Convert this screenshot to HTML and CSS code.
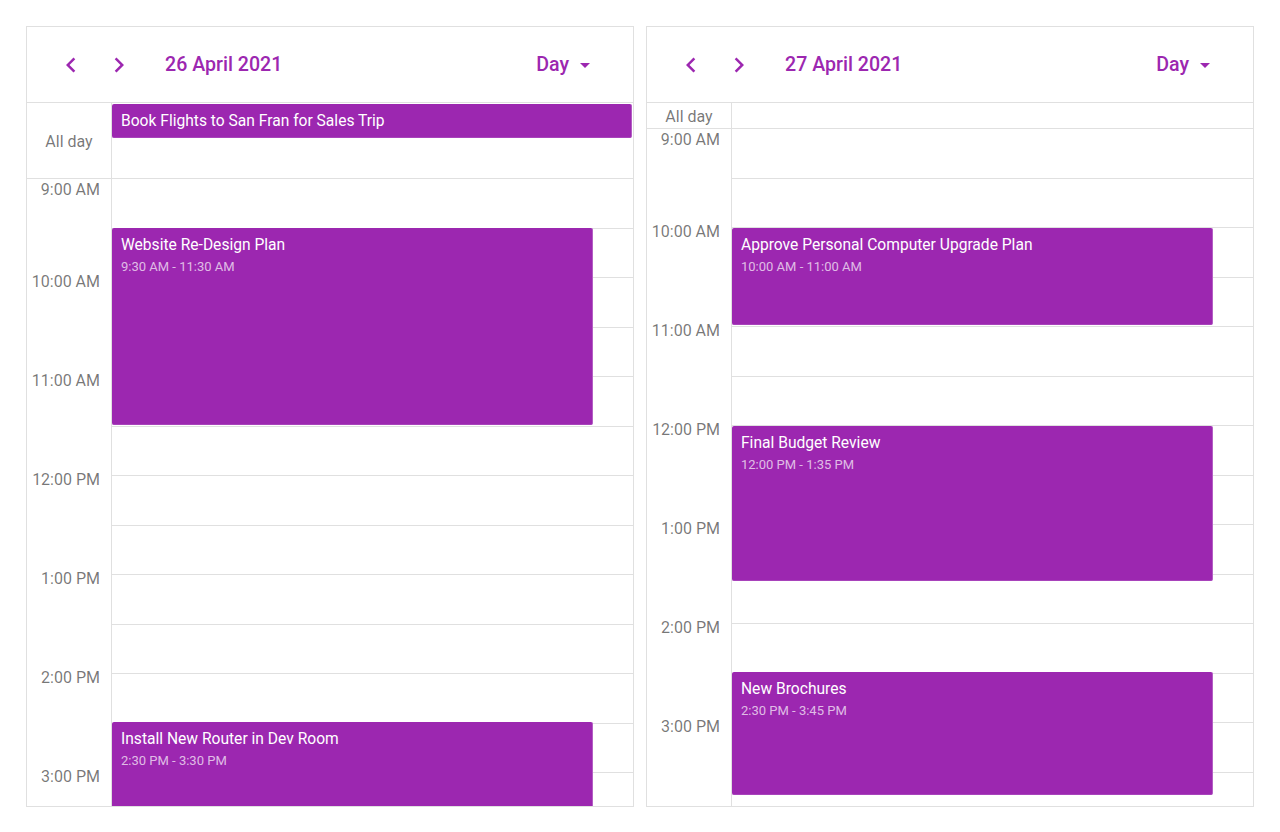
FILE: index.html
```
<!DOCTYPE html>
<html lang="en">

<head>
    <link rel="stylesheet" href="styles.css">
</head>

<body>
    <div class="schedulers">
        <div class="scheduler">
            <div class="toolbar">
                <button class="nav-button">
                    <svg viewBox="0 0 24 24"><path d="M15.41 7.41L14 6l-6 6 6 6 1.41-1.41L10.83 12z"></path></svg>
                </button>
                <button class="nav-button">
                    <svg viewBox="0 0 24 24"><path d="M10 6L8.59 7.41 13.17 12l-4.58 4.59L10 18l6-6z"></path></svg>
                </button>
                <span class="current-date">26 April 2021</span>
                <button class="view-switcher">Day
                    <svg viewBox="0 0 24 24"><path d="M7 10l5 5 5-5z"></path></svg>
                </button>
            </div>
            <div class="all-day-row all-day-row-tall">
                <div class="all-day-label">All day</div>
                <div class="all-day-cell">
                    <div class="appointment all-day-appointment">Book Flights to San Fran for Sales Trip</div>
                </div>
            </div>
            <div class="day-view">
                <div class="time-scale">
                    <div class="time-label">9:00 AM</div>
                    <div class="time-label">10:00 AM</div>
                    <div class="time-label">11:00 AM</div>
                    <div class="time-label">12:00 PM</div>
                    <div class="time-label">1:00 PM</div>
                    <div class="time-label">2:00 PM</div>
                    <div class="time-label">3:00 PM</div>
                </div>
                <div class="day-column">
                    <div class="slot"></div><div class="slot"></div><div class="slot"></div><div class="slot"></div>
                    <div class="slot"></div><div class="slot"></div><div class="slot"></div><div class="slot"></div>
                    <div class="slot"></div><div class="slot"></div><div class="slot"></div><div class="slot"></div>
                    <div class="slot"></div><div class="slot"></div><div class="slot"></div><div class="slot"></div>

                    <div class="appointment timed-appointment" style="top: 48.5px; height: 197px;">
                        <div class="appointment-title">Website Re-Design Plan</div>
                        <div class="appointment-time">9:30 AM - 11:30 AM</div>
                    </div>
                    <div class="appointment timed-appointment" style="top: 542.5px; height: 97px;">
                        <div class="appointment-title">Install New Router in Dev Room</div>
                        <div class="appointment-time">2:30 PM - 3:30 PM</div>
                    </div>
                </div>
            </div>
        </div>

        <div class="scheduler">
            <div class="toolbar">
                <button class="nav-button">
                    <svg viewBox="0 0 24 24"><path d="M15.41 7.41L14 6l-6 6 6 6 1.41-1.41L10.83 12z"></path></svg>
                </button>
                <button class="nav-button">
                    <svg viewBox="0 0 24 24"><path d="M10 6L8.59 7.41 13.17 12l-4.58 4.59L10 18l6-6z"></path></svg>
                </button>
                <span class="current-date">27 April 2021</span>
                <button class="view-switcher">Day
                    <svg viewBox="0 0 24 24"><path d="M7 10l5 5 5-5z"></path></svg>
                </button>
            </div>
            <div class="all-day-row">
                <div class="all-day-label">All day</div>
                <div class="all-day-cell"></div>
            </div>
            <div class="day-view">
                <div class="time-scale">
                    <div class="time-label">9:00 AM</div>
                    <div class="time-label">10:00 AM</div>
                    <div class="time-label">11:00 AM</div>
                    <div class="time-label">12:00 PM</div>
                    <div class="time-label">1:00 PM</div>
                    <div class="time-label">2:00 PM</div>
                    <div class="time-label">3:00 PM</div>
                </div>
                <div class="day-column">
                    <div class="slot"></div><div class="slot"></div><div class="slot"></div><div class="slot"></div>
                    <div class="slot"></div><div class="slot"></div><div class="slot"></div><div class="slot"></div>
                    <div class="slot"></div><div class="slot"></div><div class="slot"></div><div class="slot"></div>
                    <div class="slot"></div><div class="slot"></div><div class="slot"></div><div class="slot"></div>

                    <div class="appointment timed-appointment" style="top: 99px; height: 97px;">
                        <div class="appointment-title">Approve Personal Computer Upgrade Plan</div>
                        <div class="appointment-time">10:00 AM - 11:00 AM</div>
                    </div>
                    <div class="appointment timed-appointment" style="top: 297px; height: 154.75px;">
                        <div class="appointment-title">Final Budget Review</div>
                        <div class="appointment-time">12:00 PM - 1:35 PM</div>
                    </div>
                    <div class="appointment timed-appointment" style="top: 543px; height: 123px;">
                        <div class="appointment-title">New Brochures</div>
                        <div class="appointment-time">2:30 PM - 3:45 PM</div>
                    </div>
                </div>
            </div>
        </div>
    </div>
</body>

</html>
```

FILE: styles.css
```
body {
    font-family: Roboto, "Liberation Sans", sans-serif;
    background-color: #fff;
    margin: 0;
    padding: 0;
}

.schedulers {
    display: flex;
    gap: 12px;
    padding: 26px 26px 0 26px;
}

.scheduler {
    flex: 1;
    height: 781px;
    box-sizing: border-box;
    border: 1px solid #e0e0e0;
    display: flex;
    flex-direction: column;
    overflow: hidden;
}

.toolbar {
    display: flex;
    align-items: center;
    height: 75px;
    flex-shrink: 0;
    padding: 0 36px 0 20px;
    border-bottom: 1px solid #e0e0e0;
}

.nav-button,
.view-switcher {
    background: none;
    border: none;
    padding: 0;
    cursor: pointer;
    color: #9c27b0;
    font-family: inherit;
}

.nav-button {
    width: 48px;
    height: 48px;
    display: flex;
    align-items: center;
    justify-content: center;
}

.nav-button svg {
    width: 30px;
    height: 30px;
    fill: #9c27b0;
}

.view-switcher svg {
    width: 24px;
    height: 24px;
    fill: #9c27b0;
}

.current-date {
    margin-left: 22px;
    font-size: 19.6px;
    font-weight: 500;
    color: #9c27b0;
}

.view-switcher {
    margin-left: auto;
    display: flex;
    align-items: center;
    gap: 4px;
    font-size: 19.6px;
    font-weight: 500;
}

.all-day-row {
    display: flex;
    height: 26px;
    flex-shrink: 0;
    box-sizing: border-box;
    border-bottom: 1px solid #e0e0e0;
}

.all-day-row-tall {
    height: 76px;
}

.all-day-label {
    width: 84px;
    flex-shrink: 0;
    border-right: 1px solid #e0e0e0;
    display: flex;
    align-items: center;
    justify-content: center;
    padding-top: 1px;
    font-size: 16px;
    color: rgba(0, 0, 0, 0.54);
}

.all-day-cell {
    flex: 1;
    padding: 1px 1px 0 0;
}

.day-view {
    flex: 1;
    display: flex;
    overflow: hidden;
}

.time-scale {
    width: 84px;
    flex-shrink: 0;
    border-right: 1px solid #e0e0e0;
    padding-top: 1px;
}

.time-label {
    height: 99px;
    line-height: 20px;
    padding-right: 11px;
    text-align: right;
    font-size: 16px;
    color: rgba(0, 0, 0, 0.54);
}

.time-label:first-child {
    height: 92px;
}

.day-column {
    flex: 1;
    position: relative;
}

.slot {
    height: 49.5px;
    box-sizing: border-box;
    border-bottom: 1px solid #e0e0e0;
}

.appointment {
    background-color: #9c27b0;
    color: #fff;
    border-radius: 2px;
    box-sizing: border-box;
    border-right: 1px solid #b35ec4;
    border-bottom: 1px solid #a843bb;
}

.all-day-appointment {
    height: 34px;
    padding: 7px 9px 0;
    font-size: 15.6px;
    line-height: 20px;
}

.timed-appointment {
    position: absolute;
    left: 0;
    right: 40px;
    padding: 7px 9px 0;
    overflow: hidden;
}

.appointment-title {
    font-size: 15.6px;
    line-height: 20px;
    white-space: nowrap;
}

.appointment-time {
    font-size: 13px;
    line-height: 24px;
    color: rgba(255, 255, 255, 0.7);
}
```
